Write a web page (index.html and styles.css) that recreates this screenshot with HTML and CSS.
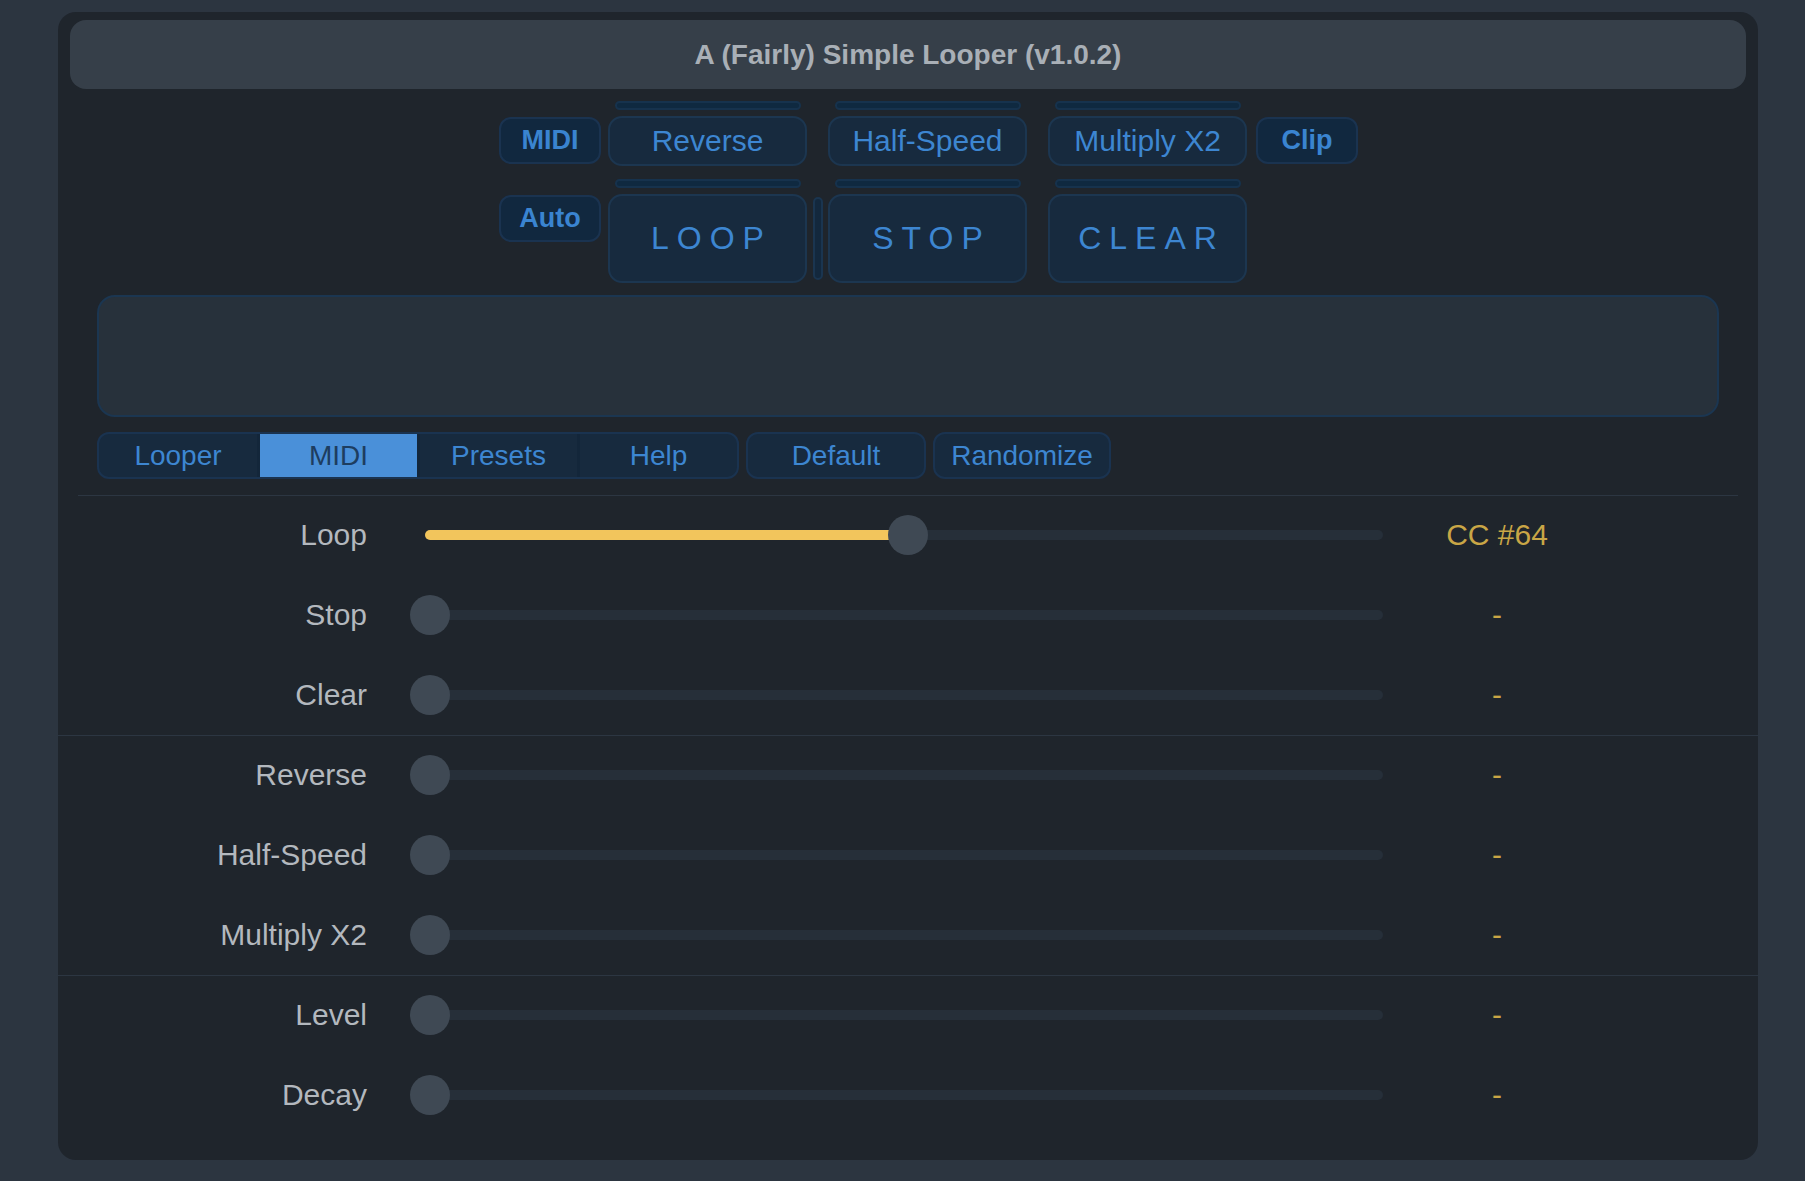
FILE: index.html
```html
<!DOCTYPE html>
<html lang="en">
<head>
    <meta charset="UTF-8">
    <meta name="viewport" content="width=device-width, initial-scale=1.0">
    <title>A (Fairly) Simple Looper</title>
    <link rel="stylesheet" href="styles.css">
</head>
<body>
    <div class="panel">
        <div class="title-bar">A (Fairly) Simple Looper (v1.0.2)</div>

        <!-- transport -->
        <div class="controls">
            <div class="side-col gap-right-small">
                <button class="side-btn">MIDI</button>
                <button class="side-btn">Auto</button>
            </div>

            <div class="main-col">
                <div class="meter"></div>
                <button class="btn">Reverse</button>
                <div class="meter meter-low"></div>
                <button class="btn big-btn">LOOP</button>
            </div>

            <div class="spacer"><div class="spacer-bar"></div></div>

            <div class="main-col">
                <div class="meter"></div>
                <button class="btn">Half-Speed</button>
                <div class="meter meter-low"></div>
                <button class="btn big-btn">STOP</button>
            </div>

            <div class="spacer"></div>

            <div class="main-col gap-right-mid">
                <div class="meter"></div>
                <button class="btn">Multiply X2</button>
                <div class="meter meter-low"></div>
                <button class="btn big-btn">CLEAR</button>
            </div>

            <div class="side-col">
                <button class="side-btn">Clip</button>
            </div>
        </div>

        <div class="display"></div>

        <div class="tab-row">
            <div class="tabs">
                <button class="tab">Looper</button>
                <button class="tab active">MIDI</button>
                <button class="tab">Presets</button>
                <button class="tab">Help</button>
            </div>
            <button class="action-btn default-btn">Default</button>
            <button class="action-btn random-btn">Randomize</button>
        </div>

        <div class="divider inset"></div>

        <div class="slider-row">
            <div class="slider-label">Loop</div>
            <div class="track">
                <div class="fill" style="width: 483px;"></div>
                <div class="thumb" style="left: 463px;"></div>
            </div>
            <div class="slider-value">CC #64</div>
        </div>
        <div class="slider-row">
            <div class="slider-label">Stop</div>
            <div class="track"><div class="thumb"></div></div>
            <div class="slider-value">-</div>
        </div>
        <div class="slider-row">
            <div class="slider-label">Clear</div>
            <div class="track"><div class="thumb"></div></div>
            <div class="slider-value">-</div>
        </div>

        <div class="divider"></div>

        <div class="slider-row">
            <div class="slider-label">Reverse</div>
            <div class="track"><div class="thumb"></div></div>
            <div class="slider-value">-</div>
        </div>
        <div class="slider-row">
            <div class="slider-label">Half-Speed</div>
            <div class="track"><div class="thumb"></div></div>
            <div class="slider-value">-</div>
        </div>
        <div class="slider-row">
            <div class="slider-label">Multiply X2</div>
            <div class="track"><div class="thumb"></div></div>
            <div class="slider-value">-</div>
        </div>

        <div class="divider"></div>

        <div class="slider-row">
            <div class="slider-label">Level</div>
            <div class="track"><div class="thumb"></div></div>
            <div class="slider-value">-</div>
        </div>
        <div class="slider-row">
            <div class="slider-label">Decay</div>
            <div class="track"><div class="thumb"></div></div>
            <div class="slider-value">-</div>
        </div>
    </div>
</body>
</html>
```

FILE: styles.css
```css
* {
    margin: 0;
    padding: 0;
    box-sizing: border-box;
    font-family: "Liberation Sans", Arial, Helvetica, sans-serif;
}

body {
    background-color: #2c3540;
    min-height: 100vh;
    padding-top: 12px;
}

button {
    font-family: inherit;
    cursor: pointer;
}

.panel {
    width: 1700px;
    height: 1148px;
    margin-left: 58px;
    padding-top: 8px;
    background-color: #1f252c;
    border-radius: 18px;
}

.title-bar {
    height: 69px;
    margin: 0 12px;
    border-radius: 16px;
    background-color: #363f49;
    color: #a9afb6;
    font-size: 28px;
    font-weight: bold;
    display: flex;
    justify-content: center;
    align-items: center;
}

/* transport buttons */
.controls {
    margin-top: 12px;
    padding-left: 41px;
    display: flex;
    justify-content: center;
}

.side-col {
    width: 102px;
    padding-top: 16px;
    display: flex;
    flex-direction: column;
    gap: 31px;
}

.gap-right-small {
    margin-right: 7px;
}

.gap-right-mid {
    margin-right: 9px;
}

.side-btn {
    height: 47px;
    border: 2px solid #1a3350;
    border-radius: 12px;
    background-color: #11283f;
    color: #3a84d0;
    font-size: 27px;
    font-weight: bold;
}

.main-col {
    width: 199px;
    display: flex;
    flex-direction: column;
}

.meter {
    height: 9px;
    margin: 0 6px 6px 7px;
    border: 2px solid #16324d;
    border-radius: 5px;
    background-color: #0f2940;
}

.meter-low {
    margin-top: 13px;
}

.btn {
    height: 50px;
    border: 2px solid #1c3650;
    border-radius: 14px;
    background-color: #172a3e;
    color: #3d86d1;
    font-size: 30px;
}

.big-btn {
    height: 89px;
    font-size: 32px;
    letter-spacing: 8px;
    padding-left: 8px;
}

.spacer {
    width: 21px;
    padding-top: 96px;
}

.spacer-bar {
    width: 10px;
    height: 83px;
    margin: 0 auto;
    border: 2px solid #1a3550;
    border-radius: 5px;
    background-color: #13283d;
}

.display {
    height: 122px;
    margin: 12px 39px 0;
    border: 2px solid #1b3651;
    border-radius: 18px;
    background-color: #27313b;
}

/* tabs */
.tab-row {
    margin: 15px 39px 0;
    display: flex;
    gap: 7px;
}

.tabs {
    display: flex;
    border: 2px solid #1a3350;
    border-radius: 12px;
    background-color: #172a3e;
    overflow: hidden;
}

.tab {
    width: 160px;
    height: 43px;
    border: none;
    border-left: 3px solid #13263a;
    background: transparent;
    color: #3d86d1;
    font-size: 28px;
}

.tab:first-child {
    border-left: none;
    width: 158px;
}

.tab.active {
    background-color: #4a90d9;
    color: #1d3d60;
}

.action-btn {
    height: 47px;
    border: 2px solid #1a3350;
    border-radius: 12px;
    background-color: #172a3e;
    color: #3d86d1;
    font-size: 28px;
}

.default-btn {
    width: 180px;
}

.random-btn {
    width: 178px;
}

.divider {
    height: 1px;
    margin-bottom: -1px;
    background-color: #2c3642;
}

.divider.inset {
    margin: 16px 20px -1px;
}

/* sliders */
.slider-row {
    height: 80px;
    display: grid;
    grid-template-columns: 309px 1016px 228px;
    align-items: center;
}

.slider-label {
    text-align: right;
    color: #b3b8be;
    font-size: 30px;
}

.track {
    position: relative;
    height: 10px;
    margin-left: 58px;
    border-radius: 5px;
    background-color: #262f39;
}

.fill {
    position: absolute;
    left: 0;
    top: 0;
    height: 10px;
    border-radius: 5px;
    background-color: #f2c55c;
}

.thumb {
    position: absolute;
    left: -15px;
    top: -15px;
    width: 40px;
    height: 40px;
    border-radius: 50%;
    background-color: #3f4954;
}

.slider-value {
    text-align: center;
    color: #c9a646;
    font-size: 30px;
}
```
